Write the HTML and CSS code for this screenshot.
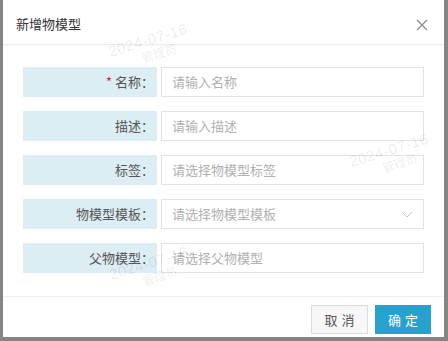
FILE: index.html
```html
<!DOCTYPE html>
<html lang="zh-CN">
<head>
<meta charset="utf-8">
<link rel="stylesheet" href="styles.css">
</head>
<body>
<div class="dialog">
  <div class="header">
    <span class="title">新增物模型</span>
    <svg class="close" width="12" height="12" viewBox="0 0 12 12"><path d="M1 1L11 11M11 1L1 11" stroke="#8a8a8a" stroke-width="1.3" fill="none"/></svg>
  </div>
  <div class="body">
    <div class="row">
      <div class="label"><span class="req">*</span> 名称：</div>
      <div class="input"><span class="ph">请输入名称</span></div>
    </div>
    <div class="row">
      <div class="label">描述：</div>
      <div class="input"><span class="ph">请输入描述</span></div>
    </div>
    <div class="row">
      <div class="label">标签：</div>
      <div class="input"><span class="ph">请选择物模型标签</span></div>
    </div>
    <div class="row">
      <div class="label">物模型模板：</div>
      <div class="input select"><span class="ph">请选择物模型模板</span>
        <svg class="arrow" width="12" height="7" viewBox="0 0 12 7"><path d="M1 1L6 6L11 1" stroke="#c4c4c4" stroke-width="1" fill="none"/></svg>
      </div>
    </div>
    <div class="row">
      <div class="label">父物模型：</div>
      <div class="input"><span class="ph">请选择父物模型</span></div>
    </div>
  </div>
  <div class="footer">
    <button class="btn cancel">取消</button>
    <button class="btn ok">确定</button>
  </div>
  <div class="wm wm1"><span class="d">2024-07-16</span><span class="n">管理员</span></div>
  <div class="wm wm2"><span class="d">2024-07-16</span><span class="n">管理员</span></div>
  <div class="wm wm3"><span class="d">2024-07-16</span><span class="n">管理员</span></div>
</div>
</body>
</html>
```
FILE: styles.css
```css
html, body {
  margin: 0;
  padding: 0;
}
body {
  width: 448px;
  height: 341px;
  background: #858585;
  font-family: "Noto Sans CJK SC", "Microsoft YaHei", sans-serif;
  font-size: 13px;
  overflow: hidden;
}
.dialog {
  position: relative;
  margin-left: 3px;
  width: 441px;
  height: 337px;
  background: #fff;
  display: flex;
  flex-direction: column;
  overflow: hidden;
}
.header {
  height: 44px;
  border-bottom: 1px solid #ececec;
  box-shadow: 0 1px 2px rgba(0,0,0,0.03);
  display: flex;
  align-items: center;
  justify-content: space-between;
  padding: 0 16px 0 13px;
  box-sizing: content-box;
}
.title {
  color: #333;
  font-size: 13px;
  line-height: 16px;
  margin-top: 4px;
}
.close {
  margin-top: 6px;
}
.body {
  padding: 22px 20px 0;
  display: flex;
  flex-direction: column;
  gap: 14px;
  height: 229px;
  border-bottom: 1px solid #f0f0f0;
}
.row {
  display: flex;
  gap: 4px;
  height: 30px;
}
.label {
  width: 134px;
  background: #dcedf4;
  color: #555;
  text-align: right;
  line-height: 30px;
  padding-right: 3px;
  box-sizing: border-box;
}
.req {
  color: #e8202a;
}
.input {
  flex: 1;
  border: 1px solid #e2e2e2;
  box-sizing: border-box;
  display: flex;
  align-items: center;
  padding-left: 10px;
  padding-right: 10px;
}
.ph {
  color: #b0b0b0;
  line-height: 16px;
}
.select {
  justify-content: space-between;
}
.footer {
  display: flex;
  justify-content: flex-end;
  gap: 7px;
  padding: 8px 13px 0 0;
}
.btn {
  height: 29px;
  font-family: "Noto Sans CJK SC", sans-serif;
  font-size: 13px;
  letter-spacing: 4px;
  padding: 0 0 0 4px;
  border-radius: 0;
}
.cancel {
  width: 57px;
  background: #f7f7f7;
  border: 1px solid #dcdcdc;
  color: #555;
}
.ok {
  width: 56px;
  background: #2aa1cc;
  border: 1px solid #2aa1cc;
  color: #fff;
}
.wm {
  position: absolute;
  display: flex;
  flex-direction: column;
  align-items: center;
  transform: rotate(-17deg);
  pointer-events: none;
  color: rgba(0,0,0,0.09);
  line-height: 15px;
}
.wm .d {
  font-family: "Liberation Sans", sans-serif;
  font-size: 15px;
  letter-spacing: 0.5px;
}
.wm .n {
  font-size: 12px;
  margin-left: 14px;
}
.wm1 { left: 106px; top: 32px; }
.wm2 { left: 347px; top: 142px; }
.wm3 { left: 107px; top: 255px; }
```
